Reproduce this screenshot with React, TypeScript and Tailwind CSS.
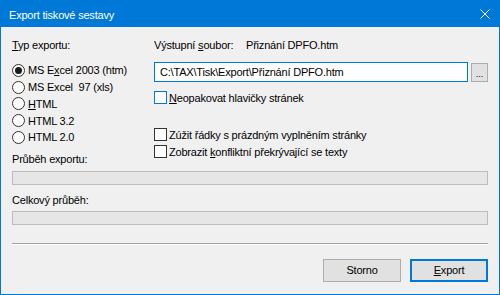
function Radio({ checked, children }: { checked?: boolean; children: React.ReactNode }) {
  return (
    <div className="flex h-[16.75px] items-center gap-[3px]">
      <span className="flex h-[13px] w-[13px] items-center justify-center rounded-full border border-[#333333] bg-white">
        {checked && <span className="h-[7px] w-[7px] rounded-full bg-[#1a1a1a]" />}
      </span>
      <span className="whitespace-pre">{children}</span>
    </div>
  );
}

function Check({ hover, children, className }: { hover?: boolean; children: React.ReactNode; className?: string }) {
  return (
    <div className={`flex h-[17px] items-center gap-[2px] ${className ?? ""}`}>
      <span
        className={`h-[13px] w-[13px] border bg-white ${hover ? "border-[#0078d7]" : "border-[#333333]"}`}
      />
      <span>{children}</span>
    </div>
  );
}

export default function App() {
  return (
    <div className="flex h-[295px] w-[500px] flex-col bg-[#0078d7] font-['Liberation_Sans',Arial,sans-serif] text-[11px] leading-[16px] tracking-[-0.2px] text-black">
      {/* title bar */}
      <div className="flex h-[27px] items-center justify-between pl-[9px] pr-[10px] pt-[2px] text-white">
        <span>Export tiskové sestavy</span>
        <svg width="10" height="10" viewBox="0 0 10 10" className="mb-[1px]">
          <path d="M0.5 0.5 L9.5 9.5 M9.5 0.5 L0.5 9.5" stroke="#ffffff" strokeWidth="1" />
        </svg>
      </div>

      {/* body */}
      <div className="mx-[1px] mb-[1px] flex flex-1 flex-col bg-[#f0f0f0] px-[11px] pt-[10px]">
        <div className="grid grid-cols-[142px_1fr]">
          <div className="flex flex-col">
            <div className="h-[16px]">
              <span className="underline">T</span>yp exportu:
            </div>
            <div className="mt-[9px] flex flex-col">
              <Radio checked>
                MS E<span className="underline">x</span>cel 2003 (htm)
              </Radio>
              <Radio>MS Excel  97 (xls)</Radio>
              <Radio>
                <span className="underline">H</span>TML
              </Radio>
              <Radio>HTML 3.2</Radio>
              <Radio>HTML 2.0</Radio>
            </div>
            <div className="mt-[5px] h-[16px]">Průběh exportu:</div>
          </div>

          <div className="flex flex-col">
            <div className="flex h-[16px]">
              <span className="w-[92px]">
                Výstupní <span className="underline">s</span>oubor:
              </span>
              <span>Přiznání DPFO.htm</span>
            </div>
            <div className="mt-[9px] flex h-[20px] gap-[3px]">
              <div className="flex flex-1 items-center border border-[#0078d7] bg-white pl-[5px]">
                C:\TAX\Tisk\Export\Přiznání DPFO.htm
              </div>
              <div className="mt-[1px] flex h-[19px] w-[17px] items-end justify-center border border-[#adadad] bg-[#e1e1e1] pb-[2px] text-[9px] leading-[9px] tracking-normal">
                ...
              </div>
            </div>
            <Check hover className="mt-[7px]">
              <span className="underline">N</span>eopakovat hlavičky stránek
            </Check>
            <Check className="mt-[20px]">Zúžit řádky s prázdným vyplněním stránky</Check>
            <Check>
              Zobrazit <span className="underline">k</span>onfliktní překrývající se texty
            </Check>
          </div>
        </div>

        <div className="mt-[4px] h-[14px] border border-[#bcbcbc] bg-[#e6e6e6]" />
        <div className="mt-[7px] h-[16px]">Celkový průběh:</div>
        <div className="mt-[3px] h-[14px] border border-[#bcbcbc] bg-[#e6e6e6]" />

        <div className="mt-[18px] border-t border-b border-t-[#a0a0a0] border-b-white" />

        <div className="mt-[14px] flex justify-end gap-[9px]">
          <button className="h-[23px] w-[78px] border border-[#adadad] bg-[#e1e1e1]">Storno</button>
          <button className="h-[23px] w-[78px] border-2 border-[#0078d7] bg-[#e1e1e1]">
            <span className="underline">E</span>xport
          </button>
        </div>
      </div>
    </div>
  );
}
